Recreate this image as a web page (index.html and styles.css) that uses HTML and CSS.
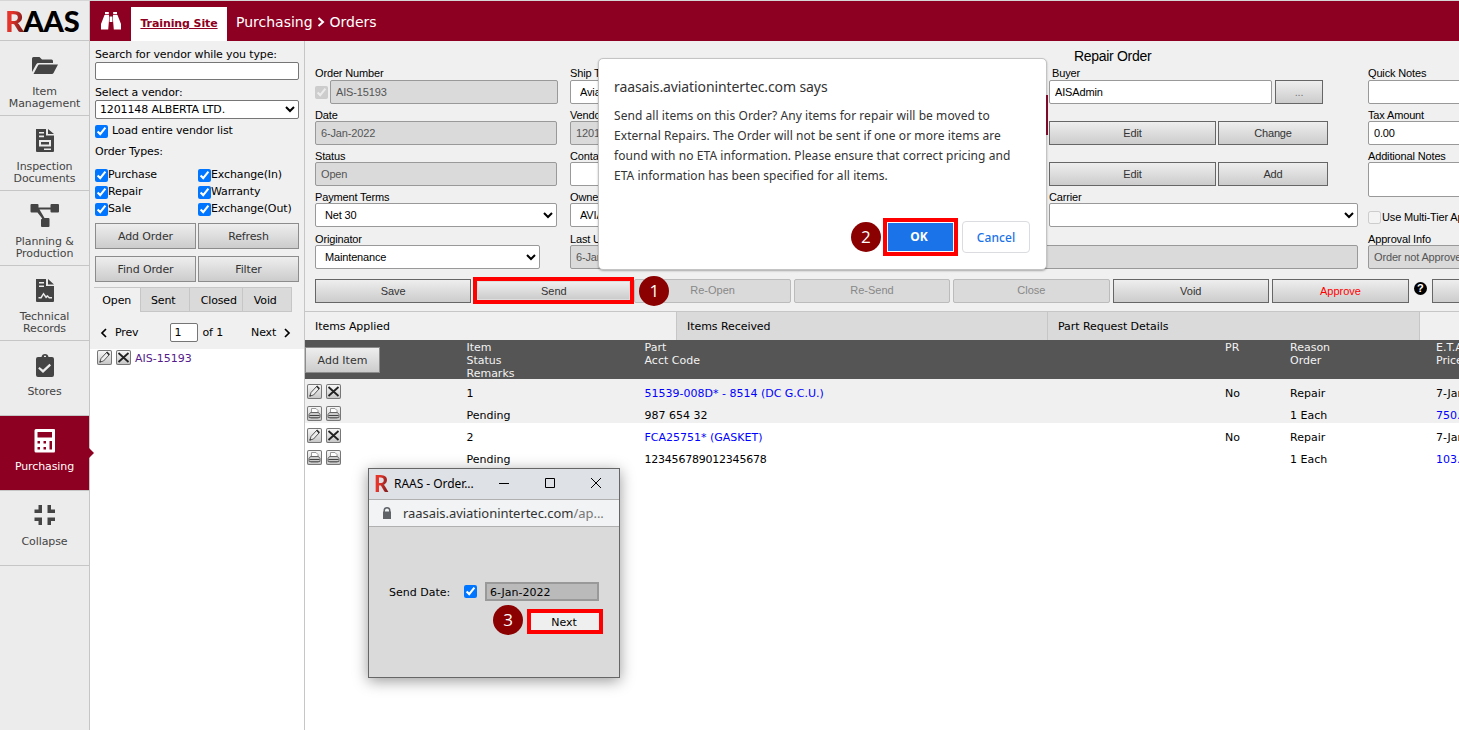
FILE: index.html
```html
<!DOCTYPE html>
<html lang="en">
<head>
    <meta charset="UTF-8">
    <title>RAAS - Orders</title>
    <link rel="stylesheet" href="styles.css">
</head>
<body>
    <!-- Shared icons -->
    <svg class="sprite">
        <symbol id="pencil" viewBox="0 0 15 15">
            <path d="M3 12l1-3.5 5.500-6 2.500 2.500-5.500 6z" fill="#eee" stroke="#555"/>
            <path d="M9 2.500l1.200-1 2.800 2.700-1.200 1.200zM2.300 12.800l.6-2 1.400 1.300z" fill="#333"/>
        </symbol>
        <symbol id="cross" viewBox="0 0 15 15">
            <path d="M2.500 3l10 9M12.500 3l-10 9" stroke="#222" stroke-width="1.8"/>
        </symbol>
        <symbol id="printer" viewBox="0 0 15 15">
            <path d="M4.500 7V2.500h4.500l2 2v2.500" fill="#fff" stroke="#999"/>
            <path d="M3.500 6.500h8l1.500 2v3H2v-3z" fill="#ccc" stroke="#666"/>
            <path d="M2.500 9.500h10" stroke="#444"/>
            <path d="M3.500 12.500h8" stroke="#999"/>
        </symbol>
    </svg>

    <nav class="sidebar">
        <div class="logo"><span class="logo-r">R</span>AAS</div>
        <div class="nav-item">
            <svg viewBox="0 0 30 24"><path d="M2 18V4.500q0-1.500 1.500-1.500h6l2.500 2.500h9.500q1.500 0 1.500 1.500V9H8.500q-1.500 0-2.200 1.200zM3.500 20l4.500-8.500q.5-1 1.500-1h18.500l-4.500 8.500q-.5 1-1.500 1z"/></svg>
            <span>Item<br>Management</span>
        </div>
        <div class="nav-item">
            <svg viewBox="0 0 30 24"><path fill-rule="evenodd" d="M6 0h10v6.500h8V22q0 1-1 1H7q-1 0-1-1zM18 0l6 5h-6zM9 3v1.600h5V3zM9 6.600v1.600h5V6.600zM9 11v6.500h12V11zM11 13h8v2.500h-8zM14 19.500V21h7v-1.500z"/></svg>
            <span>Inspection<br>Documents</span>
        </div>
        <div class="nav-item">
            <svg viewBox="0 0 30 24"><path d="M1.500 0h6q1 0 1 1v2.500h12V1q0-1 1-1h6.500q1 0 1 1v6.500q0 1-1 1h-6.500q-1 0-1-1v-2H9.500l5 8.500h4q1 0 1 1V22q0 1-1 1h-6.500q-1 0-1-1v-6.500l1.200-1L7.500 8.500h-6q-1 0-1-1V1q0-1 1-1z"/></svg>
            <span>Planning &amp;<br>Production</span>
        </div>
        <div class="nav-item">
            <svg viewBox="0 0 30 24"><path fill-rule="evenodd" d="M6 0h10v7h8v15q0 1-1 1H7q-1 0-1-1zM18 0l6 5.500h-6zM9 3v1.600h5V3zM9 6.500v1.600h5V6.500zM8.500 19.500h3l2-3.500 2.500 3.500 1.500-1.500 1.500 1.500H22v-1.600h-2.500l-2-2-1.500 1.200-2.500-3.500-3 4.500h-2z"/></svg>
            <span>Technical<br>Records</span>
        </div>
        <div class="nav-item">
            <svg viewBox="0 0 30 24"><path fill-rule="evenodd" d="M8 3h3.500q.5-3 3.500-3t3.500 3H22q2 0 2 2v16q0 2-2 2H8q-2 0-2-2V5q0-2 2-2zM14 3h2V1.700h-2zM9.500 13l-1.300 1.500 4.800 4.500 8-7.500-1.500-1.700-6.500 6z"/></svg>
            <span>Stores</span>
        </div>
        <div class="nav-item active">
            <svg viewBox="0 0 30 24"><path fill-rule="evenodd" d="M6 0h18q1 0 1 1v21q0 1.500-1 1.500H6q-1.500 0-1.500-1.500V1.500Q4.500 0 6 0zM7.500 3v5.500h14.500V3zM7.500 12v2.500H10V12zM13.500 12v2.500H16V12zM7.500 18v2.500H10V18zM13.500 18v2.500H16V18zM19.500 12v8.500H22V12z"/></svg>
            <span>Purchasing</span>
        </div>
        <div class="nav-item">
            <svg viewBox="0 0 30 24"><path d="M8.500 1H12v8H4.500V5.500h4zM17.500 1H21v4.500h4V9h-7.500zM4.500 13.500H12v7.500H8.500v-4h-4zM17.500 13.500H25V17h-4v4h-3.500z"/></svg>
            <span>Collapse</span>
        </div>
    </nav>

    <div class="page">
        <header class="topbar">
            <svg class="binoculars" viewBox="0 0 22 20"><path d="M4.500 4h4.500v5l-.8 9.500H1V13zM17.500 4H13v5l.8 9.500H21V13zM9.600 5.500h2.800V11H9.600zM5 1h3.800v2.200H5zM13.200 1H17v2.200h-3.800z"/></svg>
            <a class="site-tab" href="#">Training Site</a>
            <div class="breadcrumb">Purchasing <svg viewBox="0 0 8 10"><path d="M1.500 1l4.500 4-4.500 4"/></svg> Orders</div>
        </header>

        <div class="content">
            <aside class="vendors">
                <div class="search">
                    <label class="line">Search for vendor while you type:</label>
                    <input type="text" class="vendor-input">
                    <label class="line second">Select a vendor:</label>
                    <select class="vendor-select"><option>1201148 ALBERTA LTD.</option></select>
                    <label class="check load"><input type="checkbox" checked>Load entire vendor list</label>
                    <div class="types-title">Order Types:</div>
                    <div class="types">
                        <label class="check"><input type="checkbox" checked>Purchase</label>
                        <label class="check"><input type="checkbox" checked>Exchange(In)</label>
                        <label class="check"><input type="checkbox" checked>Repair</label>
                        <label class="check"><input type="checkbox" checked>Warranty</label>
                        <label class="check"><input type="checkbox" checked>Sale</label>
                        <label class="check"><input type="checkbox" checked>Exchange(Out)</label>
                    </div>
                    <div class="actions">
                        <button>Add Order</button>
                        <button>Refresh</button>
                        <button>Find Order</button>
                        <button>Filter</button>
                    </div>
                    <div class="status-tabs">
                        <div class="current">Open</div>
                        <div>Sent</div>
                        <div class="closed">Closed</div>
                        <div>Void</div>
                    </div>
                    <div class="pager">
                        <svg viewBox="0 0 8 10"><path d="M6 1L2 5l4 4"/></svg>
                        <span class="prev">Prev</span>
                        <input type="text" value="1">
                        <span>of 1</span>
                        <span class="next">Next</span>
                        <svg viewBox="0 0 8 10"><path d="M2 1l4 4-4 4"/></svg>
                    </div>
                </div>
                <div class="order">
                    <svg class="icon"><use href="#pencil"/></svg>
                    <svg class="icon"><use href="#cross"/></svg>
                    <a href="#">AIS-15193</a>
                </div>
            </aside>

            <main>
                <h1>Repair Order</h1>
                <div class="form">
                    <div class="field first">
                        <label>Order Number</label>
                        <div class="with-check">
                            <input type="checkbox" checked disabled>
                            <input type="text" value="AIS-15193" disabled>
                        </div>
                    </div>
                    <div class="field first"><label>Ship To</label><select><option>Aviation Intertec Services</option></select></div>
                    <div class="field first">
                        <label class="buyer">Buyer</label>
                        <div class="buyer-row"><input type="text" value="AISAdmin"><button>...</button></div>
                    </div>
                    <div class="field first notes"><label>Quick Notes</label><input type="text"></div>

                    <div class="field"><label>Date</label><input type="text" value="6-Jan-2022" disabled></div>
                    <div class="field"><label>Vendor</label><input type="text" value="1201148 ALBERTA LTD." disabled></div>
                    <div class="field"><label></label><div class="pair"><button>Edit</button><button>Change</button></div></div>
                    <div class="field notes"><label>Tax Amount</label><input type="text" value="0.00"></div>

                    <div class="field"><label>Status</label><input type="text" value="Open" disabled></div>
                    <div class="field"><label>Contact</label><select><option></option></select></div>
                    <div class="field"><label></label><div class="pair"><button>Edit</button><button>Add</button></div></div>
                    <div class="field notes"><label>Additional Notes</label><textarea></textarea></div>

                    <div class="field"><label>Payment Terms</label><select><option>Net 30</option></select></div>
                    <div class="field"><label>Owner</label><select><option>AVIATION INTERTEC</option></select></div>
                    <div class="field"><label>Carrier</label><select class="carrier"><option></option></select></div>
                    <div class="field notes"><div class="multi"><input type="checkbox" disabled>Use Multi-Tier Approval</div></div>

                    <div class="field"><label>Originator</label><select class="originator"><option>Maintenance</option></select></div>
                    <div class="field updated"><label>Last Updated</label><input type="text" value="6-Jan-2022" disabled></div>
                    <div class="field notes"><label>Approval Info</label><input type="text" value="Order not Approved" disabled></div>
                </div>

                <div class="toolbar">
                    <button>Save</button>
                    <div class="marked send"><button>Send</button><span class="step">1</span></div>
                    <button disabled>Re-Open</button>
                    <button disabled>Re-Send</button>
                    <button disabled>Close</button>
                    <button>Void</button>
                    <button class="approve">Approve</button>
                    <span class="help">?</span>
                    <button class="more"></button>
                </div>

                <div class="tabs">
                    <div class="current">Items Applied</div>
                    <div>Items Received</div>
                    <div>Part Request Details</div>
                </div>

                <div class="items">
                    <div class="row head">
                        <div class="tools"><button>Add Item</button></div>
                        <div>Item<br>Status<br>Remarks</div>
                        <div>Part<br>Acct Code</div>
                        <div>PR</div>
                        <div>Reason<br>Order</div>
                        <div>E.T.A.<br>Price</div>
                    </div>
                    <div class="row">
                        <div class="tools">
                            <svg class="icon"><use href="#pencil"/></svg>
                            <svg class="icon"><use href="#cross"/></svg>
                            <svg class="icon"><use href="#printer"/></svg>
                            <svg class="icon"><use href="#printer"/></svg>
                        </div>
                        <div>1<br>Pending</div>
                        <div><a href="#">51539-008D* - 8514 (DC G.C.U.)</a><br>987 654 32</div>
                        <div>No</div>
                        <div>Repair<br>1 Each</div>
                        <div>7-Jan-2022<br><a href="#">750.00</a></div>
                    </div>
                    <div class="row">
                        <div class="tools">
                            <svg class="icon"><use href="#pencil"/></svg>
                            <svg class="icon"><use href="#cross"/></svg>
                            <svg class="icon"><use href="#printer"/></svg>
                            <svg class="icon"><use href="#printer"/></svg>
                        </div>
                        <div>2<br>Pending</div>
                        <div><a href="#">FCA25751* (GASKET)</a><br><span class="account">123456789012345678</span></div>
                        <div>No</div>
                        <div>Repair<br>1 Each</div>
                        <div>7-Jan-2022<br><a href="#">103.00</a></div>
                    </div>
                </div>
            </main>
        </div>
    </div>

    <!-- Browser confirm dialog -->
    <div class="dialog">
        <h2>raasais.aviationintertec.com says</h2>
        <p>Send all items on this Order? Any items for repair will be moved to<br>
        External Repairs. The Order will not be sent if one or more items are<br>
        found with no ETA information. Please ensure that correct pricing and<br>
        ETA information has been specified for all items.</p>
        <div class="dialog-buttons">
            <div class="marked ok"><button>OK</button><span class="step">2</span></div>
            <button class="cancel">Cancel</button>
        </div>
    </div>

    <!-- Send date window -->
    <div class="popup">
        <div class="titlebar">
            <span class="logo-r">R</span>
            <span class="title">RAAS - Order...</span>
            <svg viewBox="0 0 102 12"><path d="M0 6.500h10M46.500 1.500h9v9h-9zM92 1l10 10M102 1L92 11"/></svg>
        </div>
        <div class="address">
            <svg viewBox="0 0 10 12"><path fill-rule="evenodd" d="M1.500 4.500V3.500a3.500 3.500 0 0 1 7 0v1h.5v7.500H1V4.500zM3 4.500h4v-1a2 2 0 0 0-4 0z"/></svg>
            <span>raasais.aviationintertec.com<em>/ap...</em></span>
        </div>
        <div class="popup-body">
            <div class="date-row">
                <label>Send Date:</label>
                <input type="checkbox" checked>
                <input type="text" value="6-Jan-2022">
            </div>
            <div class="marked next-button"><button>Next</button><span class="step">3</span></div>
        </div>
    </div>
</body>
</html>
```

FILE: styles.css
```css
* {
    margin: 0;
    padding: 0;
    box-sizing: border-box;
}

body {
    display: flex;
    width: 1459px;
    height: 730px;
    overflow: hidden;
    background: #fff;
    border-top: 1px solid #d6d6d6;
    font: 11px/13px "DejaVu Sans", Verdana, sans-serif;
    color: #000;
}

input, select, textarea, button {
    font-family: inherit;
    font-size: inherit;
    letter-spacing: inherit;
    color: #000;
}

input[type="checkbox"] {
    width: 13px;
    height: 13px;
    flex: none;
}

input[type="text"], select, textarea {
    border: 1px solid #767676;
    border-radius: 2px;
    background: #fff;
}

a {
    color: #00f;
    text-decoration: none;
}

.sprite {
    position: absolute;
    width: 0;
    height: 0;
}

.icon {
    width: 15px;
    height: 15px;
    flex: none;
    background: linear-gradient(#fafafa, #c4c4c4);
    box-shadow: inset 0 0 0 1px #777;
    border-radius: 2px;
}

/* Sidebar */
.sidebar {
    width: 90px;
    flex: none;
    background: #ececec;
    border-right: 1px solid #c6c6c6;
}

.logo {
    height: 40px;
    padding-left: 5px;
    border-bottom: 1px solid #c6c6c6;
    font: 900 29px/39px Lato, sans-serif;
    letter-spacing: -0.3px;
    white-space: nowrap;
}

.logo-r {
    color: transparent;
    background: linear-gradient(100deg, #e5352b 35%, #7a1a1c 90%);
    -webkit-background-clip: text;
    background-clip: text;
}

.nav-item {
    position: relative;
    display: flex;
    flex-direction: column;
    align-items: center;
    height: 75px;
    padding-top: 13px;
    border-bottom: 1px solid #c6c6c6;
    text-align: center;
    line-height: 12px;
    letter-spacing: -0.1px;
    color: #444;
}

.nav-item svg {
    width: 30px;
    height: 24px;
    margin-bottom: 8px;
    fill: #444;
}

.nav-item.active {
    background: #8e0021;
    color: #fff;
}

.nav-item.active svg {
    fill: #fff;
}

.nav-item.active::after {
    content: "";
    position: absolute;
    left: 89px;
    top: 32px;
    border: 5px solid transparent;
    border-left-color: #8e0021;
    border-right: 0;
}

/* Top bar */
.page {
    width: 1369px;
    flex: none;
}

.topbar {
    display: flex;
    height: 40px;
    background: #8e0021;
    color: #fff;
}

.binoculars {
    width: 22px;
    height: 20px;
    margin: 10px 9px 0 10px;
    fill: #fff;
}

.site-tab {
    width: 96px;
    margin-top: 6px;
    background: #fff;
    color: #8e0021;
    font-weight: bold;
    line-height: 33px;
    letter-spacing: -0.1px;
    text-align: center;
    text-decoration: underline;
    white-space: nowrap;
}

.breadcrumb {
    margin-left: 9px;
    font-size: 14px;
    line-height: 42px;
}

.breadcrumb svg {
    width: 8px;
    height: 10px;
    fill: none;
    stroke: #fff;
    stroke-width: 2;
}

.content {
    display: flex;
    height: 689px;
}

/* Vendor panel */
.vendors {
    width: 215px;
    flex: none;
    border-right: 1px solid #c6c6c6;
}

.search {
    height: 308px;
    padding: 7px 5px 0;
    background: #f0f0f0;
    letter-spacing: -0.13px;
}

.line {
    display: block;
    height: 14px;
}

.line.second {
    margin-top: 6px;
}

.vendor-input, .vendor-select {
    display: block;
    width: 204px;
    height: 18px;
}

.vendor-select {
    height: 19px;
}

.check {
    display: flex;
    height: 17px;
    line-height: 13px;
}

.check input {
    margin-top: 1px;
}

.load {
    margin-top: 5px;
}

.load input {
    margin-right: 4px;
}

.types-title {
    margin: 4px 0 10px;
}

.types {
    display: grid;
    grid-template-columns: 103px 101px;
}

.actions {
    display: grid;
    grid-template-columns: 101px 101px;
    gap: 7px 2px;
    margin-top: 4px;
}

.actions button, .row button {
    height: 26px;
    border: 1px solid #8c8c8c;
    background: linear-gradient(#eee, #ccc);
    color: #333;
}

.status-tabs {
    display: flex;
    height: 25px;
    width: 198px;
    margin: 5px 0 0 -1px;
}

.status-tabs div {
    flex: 1;
    padding-right: 3px;
    border: 1px solid #c6c6c6;
    border-left: 0;
    background: #dadada;
    line-height: 25px;
    text-align: center;
}

.status-tabs .closed {
    padding: 0 0 0 6px;
}

.status-tabs .current {
    padding: 0;
    border-bottom: 0;
    background: #f0f0f0;
}

.pager {
    display: flex;
    align-items: center;
    height: 19px;
    margin-top: 11px;
    padding-left: 5px;
}

.pager input {
    width: 28px;
    height: 19px;
    margin: 0 4px 0 32px;
    padding-left: 3px;
}

.pager svg {
    width: 8px;
    height: 10px;
    fill: none;
    stroke: #000;
    stroke-width: 1.7;
}

.prev {
    margin-left: 7px;
}

.next {
    margin: 0 7px 0 28px;
}

.order {
    display: flex;
    gap: 4px;
    padding: 1px 7px;
    line-height: 17px;
}

.order a {
    color: #551a8b;
}

/* Order form */
main {
    width: 1154px;
    flex: none;
    overflow: hidden;
    background: #fff;
}

h1 {
    height: 25px;
    padding-left: 769px;
    background: #f0f0f0;
    font: 14px/31px "Liberation Sans", Arial, sans-serif;
    letter-spacing: -0.3px;
}

.form {
    display: grid;
    grid-template-columns: 255px 479px 319px 242px;
    grid-template-rows: 41px 41px 41px 42px 41px;
    height: 213px;
    padding-left: 10px;
    background: #f0f0f0;
    font: 11px/14px "Liberation Sans", Arial, sans-serif;
    letter-spacing: -0.15px;
}

.field > label {
    display: block;
    height: 14px;
    padding-top: 1px;
}

.field.first > label {
    padding-top: 0;
}

.field input[type="text"], .field select {
    display: block;
    width: 242px;
    height: 24px;
    padding: 0 5px;
    border-color: #999;
}

.field input:disabled {
    background: #dadada;
    color: #555;
}

.field button, .toolbar button {
    height: 24px;
    border: 1px solid #666;
    background: linear-gradient(#eee, #ccc);
    color: #333;
}

.with-check {
    display: flex;
    align-items: center;
    gap: 2px;
}

.with-check input[type="text"] {
    width: 228px;
}

.field label.buyer {
    padding-left: 3px;
}

.buyer-row {
    display: flex;
    gap: 3px;
}

.buyer-row input[type="text"] {
    width: 223px;
}

.buyer-row button {
    width: 48px;
    color: #777;
}

.pair {
    display: grid;
    grid-template-columns: 167px 110px;
    gap: 2px;
}

.field .carrier {
    width: 309px;
}

.field .originator {
    width: 225px;
}

.field textarea {
    display: block;
    width: 242px;
    height: 35px;
    border-color: #999;
    resize: none;
}

.multi {
    display: flex;
    gap: 1px;
    padding-top: 21px;
    white-space: nowrap;
}

.multi input {
    margin-top: 1px;
}

.updated {
    grid-column: span 2;
}

.field.updated input {
    width: 788px;
}

.toolbar {
    display: flex;
    align-items: flex-start;
    gap: 3px;
    height: 32px;
    padding-left: 10px;
    background: #f0f0f0;
    font: 11px/14px "Liberation Sans", Arial, sans-serif;
}

.toolbar > * {
    flex: none;
}

.toolbar > button {
    width: 156.400px;
}

.toolbar button:disabled {
    border-color: #bbb;
    border-radius: 2px;
    background: #dadada;
    color: #888;
    padding-bottom: 2px;
}

.toolbar .approve {
    width: 137px;
    color: #f00;
}

.help {
    width: 13px;
    height: 13px;
    margin: 3px 2px 0;
    border-radius: 50%;
    background: #000;
    color: #fff;
    font-weight: bold;
    font-size: 11px;
    line-height: 13px;
    text-align: center;
}

/* Numbered steps */
.marked {
    position: relative;
    border: 4px solid #f00;
}

.marked button {
    display: block;
    width: 100%;
    height: 100%;
}

.send {
    width: 161px;
    height: 27px;
    margin: -2px -3px 0 -1px;
}

.toolbar .send button {
    height: 19px;
    border-color: #ddd;
}

.step {
    position: absolute;
    width: 30px;
    height: 30px;
    border-radius: 50%;
    background: #8b0000;
    color: #fff;
    font: 17px/29px "Open Sans", sans-serif;
    text-align: center;
}

.send .step {
    left: 162px;
    top: -5px;
}

/* Items */
.tabs {
    display: flex;
    height: 29px;
    border-top: 1px solid #c6c6c6;
    background: #f0f0f0;
    letter-spacing: -0.06px;
}

.tabs div {
    width: 371px;
    padding-left: 10px;
    border-left: 1px solid #c6c6c6;
    background: #dadada;
    line-height: 29px;
}

.tabs .current {
    border-left: 0;
    background: #f0f0f0;
}

.tabs div:last-child {
    width: 373px;
    border-right: 1px solid #c6c6c6;
}

.row {
    display: grid;
    grid-template-columns: 161.500px 178px 580.500px 65px 146px 100px;
    height: 44px;
    line-height: 22px;
    padding-top: 3px;
}

.row > div {
    padding-top: 1px;
}

.row:nth-child(even) {
    background: #f0f0f0;
}

.row .tools {
    display: grid;
    grid-template-columns: 15px 15px;
    gap: 7px 4px;
    align-content: start;
    padding: 2px;
}

.row.head {
    height: 39px;
    padding-top: 0;
    background: #555;
    color: #f2f2f2;
    line-height: 13px;
}

.row.head .tools {
    display: block;
    padding: 7px 0 0;
}

.head button {
    width: 75px;
}

.account {
    letter-spacing: -0.22px;
}

/* Confirm dialog */
.dialog {
    position: absolute;
    left: 598px;
    top: 58px;
    width: 449px;
    height: 212px;
    padding: 19px 16px;
    background: #fff;
    border: 1px solid #c4c4c4;
    border-radius: 5px;
    box-shadow: 0 1px 2px rgba(0, 0, 0, 0.3);
    font: 12px/20px "Noto Sans", sans-serif;
    letter-spacing: 0.06px;
    color: #333;
    white-space: nowrap;
}

.dialog::after {
    content: "";
    position: absolute;
    left: 447px;
    top: 36px;
    width: 2px;
    height: 40px;
    background: #7d0a28;
}

.dialog h2 {
    margin-left: -1px;
    font-size: 14px;
    font-weight: normal;
    line-height: 18px;
    letter-spacing: -0.1px;
}

.dialog p {
    margin: 10px 0 0 -1px;
}

.dialog-buttons {
    display: flex;
    justify-content: flex-end;
    align-items: center;
    gap: 4px;
    margin-top: 32px;
}

.dialog-buttons button {
    font-weight: bold;
}

.ok {
    width: 75px;
    height: 38px;
}

.ok button {
    padding: 0 3px 1px 0;
    border: 1px solid #fff;
    background: #1a73e8;
    color: #fff;
}

.ok .step {
    left: -36px;
    top: 0;
}

.dialog-buttons .cancel {
    width: 68px;
    height: 32px;
    border: 1px solid #dadce0;
    border-radius: 4px;
    background: #fff;
    color: #1a73e8;
    font-weight: 500;
}

/* Popup window */
.popup {
    position: absolute;
    left: 368px;
    top: 468px;
    width: 252px;
    height: 210px;
    background: #dadada;
    border: 1px solid #666;
    box-shadow: 0 3px 14px rgba(0, 0, 0, 0.4);
}

.titlebar {
    display: flex;
    align-items: center;
    height: 31px;
    padding-left: 5px;
    background: #dee1e6;
    border-bottom: 1px solid #b0b0b0;
    font: 12px/30px "Noto Sans", sans-serif;
    letter-spacing: -0.05px;
    white-space: nowrap;
}

.titlebar .logo-r {
    width: 15px;
    font: 900 22px/28px Lato, sans-serif;
}

.title {
    width: 110px;
    padding-left: 5px;
}

.titlebar svg {
    width: 102px;
    height: 12px;
    margin-top: -2px;
    fill: none;
    stroke: #000;
}

.address {
    display: flex;
    align-items: center;
    gap: 11px;
    height: 27px;
    padding-left: 13px;
    background: #f1f3f4;
    border-bottom: 1px solid #b0b0b0;
    font: 13px/26px "Noto Sans", sans-serif;
    letter-spacing: -0.04px;
    color: #333;
    white-space: nowrap;
}

.address svg {
    width: 10px;
    height: 12px;
    fill: #5f6368;
}

.address em {
    font-style: normal;
    color: #777;
}

.popup-body {
    padding: 55px 16px 0 20px;
}

.date-row {
    display: flex;
    align-items: center;
}

.date-row label {
    width: 75px;
    padding-top: 1px;
}

.date-row input[type="text"] {
    width: 114px;
    height: 19px;
    margin-left: 8px;
    padding: 1px 0 0 3px;
    border: 2px solid #999;
    border-radius: 0;
    background: #bababa;
}

.next-button {
    width: 76px;
    height: 25px;
    margin: 8px 0 0 auto;
}

.next-button button {
    padding: 1px 2px 0 0;
    border: 0;
    background: #efefef;
}

.next-button .step {
    left: -38px;
    top: -8px;
}
```
